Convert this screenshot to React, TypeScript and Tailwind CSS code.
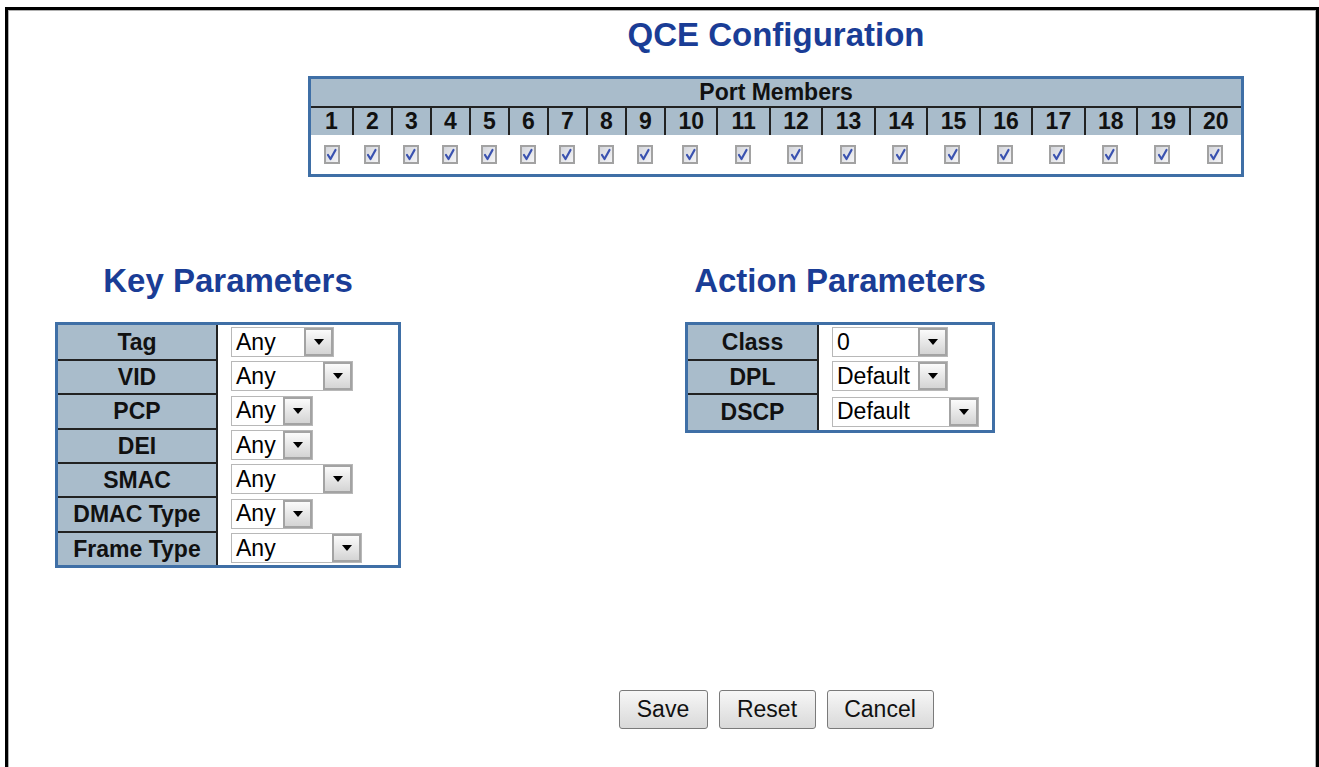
import React from "react";

const FONT = '"Liberation Sans", Arial, Helvetica, sans-serif';

function Select({ wClass, value }: { wClass: string; value: string }) {
  return (
    <div className={`flex h-[30px] border border-[#b8b8b8] bg-white ${wClass}`}>
      <div className="flex-1 flex items-center pl-[4px] text-[23px] leading-none text-black whitespace-nowrap overflow-hidden">
        {value}
      </div>
      <div className="w-[29px] h-full border-2 border-[#a3a3a3] bg-gradient-to-b from-[#fbfbfb] to-[#d4d4d4] flex items-center justify-center shrink-0">
        <svg width="10" height="6" viewBox="0 0 10 6">
          <path d="M0 0 L10 0 L5 6 Z" fill="#000" />
        </svg>
      </div>
    </div>
  );
}

function Checkbox() {
  return (
    <div className="w-[16px] h-[19px] border-2 border-[#a2a2a2] bg-gradient-to-br from-[#d4d6dc] to-[#f4f4f6] flex items-center justify-center">
      <svg width="11" height="13" viewBox="0 0 11 13">
        <path d="M2 7 L4.5 11 L9.5 2" stroke="#3a52b0" strokeWidth="2.2" fill="none" strokeLinecap="round" strokeLinejoin="round" />
      </svg>
    </div>
  );
}

const ports = Array.from({ length: 20 }, (_, i) => i + 1);

type Row = { label: string; value: string; w: string; h: string };

const keyRows: Row[] = [
  { label: "Tag", value: "Any", w: "w-[103px]", h: "h-[34px]" },
  { label: "VID", value: "Any", w: "w-[122px]", h: "h-[34px]" },
  { label: "PCP", value: "Any", w: "w-[82px]", h: "h-[35px]" },
  { label: "DEI", value: "Any", w: "w-[82px]", h: "h-[34px]" },
  { label: "SMAC", value: "Any", w: "w-[122px]", h: "h-[34px]" },
  { label: "DMAC Type", value: "Any", w: "w-[82px]", h: "h-[35px]" },
  { label: "Frame Type", value: "Any", w: "w-[131px]", h: "h-[34px]" },
];

const actionRows: Row[] = [
  { label: "Class", value: "0", w: "w-[116px]", h: "h-[34px]" },
  { label: "DPL", value: "Default", w: "w-[116px]", h: "h-[34px]" },
  { label: "DSCP", value: "Default", w: "w-[147px]", h: "h-[37px]" },
];

function ParamTable({ rows, labelW }: { rows: Row[]; labelW: string }) {
  return (
    <div className="border-[3px] border-[#3f6fa6] bg-white">
      {rows.map((r, i) => (
        <div key={r.label} className={`flex ${r.h}`}>
          <div
            className={`${labelW} shrink-0 bg-[#a9bccb] border-r-2 border-[#222222] ${
              i > 0 ? "border-t-2" : ""
            } flex items-center justify-center text-[23px] font-bold text-[#111111] leading-none whitespace-nowrap`}
          >
            {r.label}
          </div>
          <div className="flex-1 flex items-center pl-[13px]">
            <Select wClass={r.w} value={r.value} />
          </div>
        </div>
      ))}
    </div>
  );
}

function Btn({ label, w }: { label: string; w: string }) {
  return (
    <div
      className={`${w} h-[39px] rounded-[3px] border border-[#7a7a7a] bg-gradient-to-b from-[#f7f7f7] to-[#d9d9d9] flex items-center justify-center text-[23px] text-[#111111] leading-none`}
    >
      {label}
    </div>
  );
}

export default function App() {
  return (
    <div className="w-[1319px] h-[767px] overflow-hidden bg-white" style={{ fontFamily: FONT }}>
      <div className="ml-[5px] mt-[7px] w-[1314px] h-[760px] border-t-[3px] border-l-[3px] border-r-[3px] border-black">
        <div className="h-full border-t border-l border-r border-[#b0b0b0]">
          {/* Title */}
          <div className="ml-[299px] w-[936px] pt-[5px] text-center text-[33px] leading-[38px] font-bold text-[#1a3d96]">
            QCE Configuration
          </div>

          {/* Port members table */}
          <div className="ml-[299px] w-[936px] mt-[22px] border-[3px] border-[#3f6fa6]">
            <div className="h-[29px] bg-[#a9bccb] border-b-2 border-[#222222] flex items-center justify-center text-[23px] font-bold leading-none text-[#111111]">
              Port Members
            </div>
            <div className="grid grid-cols-[41px_repeat(8,39px)_repeat(11,1fr)] h-[27px] bg-[#a9bccb]">
              {ports.map((p) => (
                <div
                  key={p}
                  className={`${p > 1 ? "border-l-2 border-[#222222]" : ""} flex items-center justify-center text-[23px] font-bold leading-none text-[#111111]`}
                >
                  {p}
                </div>
              ))}
            </div>
            <div className="grid grid-cols-[41px_repeat(8,39px)_repeat(11,1fr)] h-[39px] bg-white">
              {ports.map((p) => (
                <div key={p} className="flex items-center justify-center">
                  <Checkbox />
                </div>
              ))}
            </div>
          </div>

          {/* Parameters */}
          <div className="flex mt-[85px] ml-[46px]">
            <div className="w-[346px]">
              <div className="text-center text-[33px] leading-[38px] font-bold text-[#1a3d96] whitespace-nowrap">
                Key Parameters
              </div>
              <div className="mt-[22px]">
                <ParamTable rows={keyRows} labelW="w-[160px]" />
              </div>
            </div>
            <div className="w-[310px] ml-[284px]">
              <div className="text-center text-[33px] leading-[38px] font-bold text-[#1a3d96] whitespace-nowrap">
                Action Parameters
              </div>
              <div className="mt-[22px]">
                <ParamTable rows={actionRows} labelW="w-[131px]" />
              </div>
            </div>
          </div>

          {/* Buttons */}
          <div className="ml-[299px] w-[936px] mt-[122px] flex justify-center gap-[11px]">
            <Btn label="Save" w="w-[89px]" />
            <Btn label="Reset" w="w-[97px]" />
            <Btn label="Cancel" w="w-[107px]" />
          </div>
        </div>
      </div>
    </div>
  );
}
